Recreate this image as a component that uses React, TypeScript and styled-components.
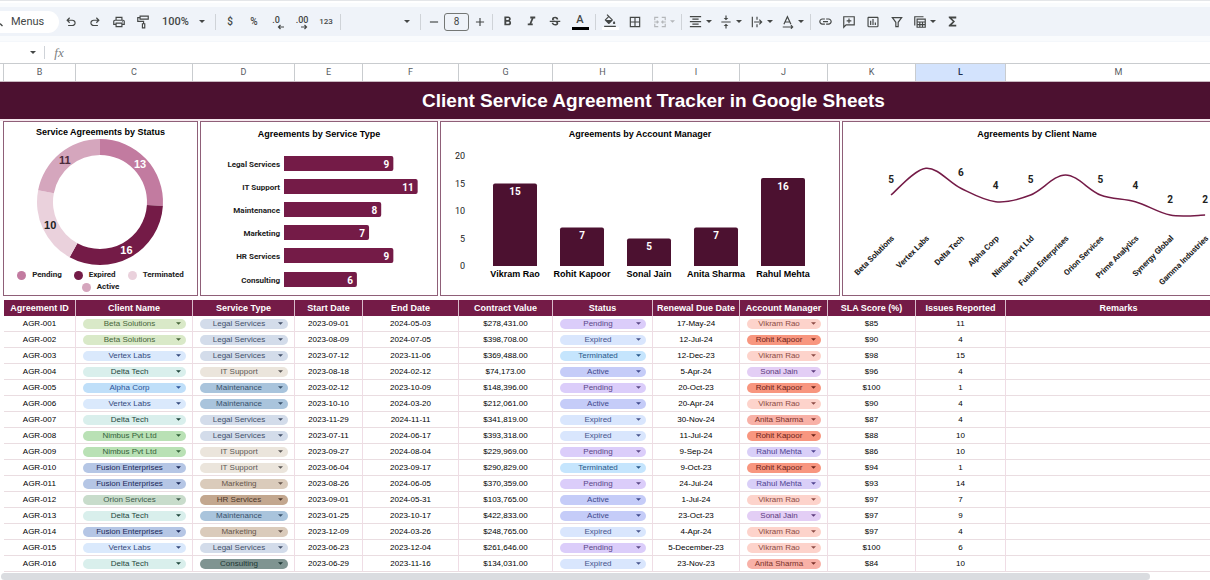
import React, { useState } from "react";
import styled, { createGlobalStyle } from "styled-components";
import {
  MdOutlinePrint,
  MdFormatBold,
  MdFormatItalic,
  MdStrikethroughS,
  MdFormatColorFill,
  MdBorderAll,
  MdFormatAlignCenter,
  MdVerticalAlignCenter,
  MdLink,
  MdInsertChartOutlined,
  MdFunctions,
  MdOutlineFilterAlt,
  MdAdd,
  MdRemove,
} from "react-icons/md";

const sans = `"Liberation Sans", Arial, sans-serif`;
const ui = `Roboto, "Liberation Sans", sans-serif`;

const plum = "#741b47";
const darkPlum = "#4c1130";

const GlobalStyle = createGlobalStyle`
  *, *::before, *::after { box-sizing: border-box; }
  body {
    margin: 0;
    background: #ffffff;
    color: #000000;
    font-family: ${sans};
    overflow-x: hidden;
  }
  button, input, select {
    margin: 0;
    padding: 0;
    border: 0;
    background: transparent;
    color: inherit;
    font: inherit;
  }
`;

/* ---------- Data ---------- */

const columns: { letter: string; title: string; width?: number }[] = [
  { letter: "B", title: "Agreement ID", width: 72 },
  { letter: "C", title: "Client Name", width: 117 },
  { letter: "D", title: "Service Type", width: 102 },
  { letter: "E", title: "Start Date", width: 68 },
  { letter: "F", title: "End Date", width: 96 },
  { letter: "G", title: "Contract Value", width: 94 },
  { letter: "H", title: "Status", width: 100 },
  { letter: "I", title: "Renewal Due Date", width: 87 },
  { letter: "J", title: "Account Manager", width: 88 },
  { letter: "K", title: "SLA Score (%)", width: 88 },
  { letter: "L", title: "Issues Reported", width: 90 },
  { letter: "M", title: "Remarks" },
];

type Tone = { bg: string; fg: string };
type Palette = Record<string, Tone>;

const clients: Palette = {
  "Beta Solutions": { bg: "#d9e9c8", fg: "#47663a" },
  "Vertex Labs": { bg: "#dae9fc", fg: "#33497c" },
  "Delta Tech": { bg: "#d9efec", fg: "#1f463c" },
  "Alpha Corp": { bg: "#bfdff9", fg: "#2c559a" },
  "Nimbus Pvt Ltd": { bg: "#b9e1b5", fg: "#33623a" },
  "Fusion Enterprises": { bg: "#b5c6e5", fg: "#1a2858" },
  "Orion Services": { bg: "#c8dccb", fg: "#3f5c4d" },
};

const services: Palette = {
  "Legal Services": { bg: "#d3dcea", fg: "#43516a" },
  "IT Support": { bg: "#ebe5dc", fg: "#5c5957" },
  Maintenance: { bg: "#a9c4dc", fg: "#38526c" },
  Marketing: { bg: "#dacbbb", fg: "#66564c" },
  "HR Services": { bg: "#c3a78f", fg: "#4c382c" },
  Consulting: { bg: "#7f9491", fg: "#1d3734" },
};

const statuses: Palette = {
  Pending: { bg: "#dbcdfa", fg: "#5a4886" },
  Expired: { bg: "#d9e6fd", fg: "#47558c" },
  Terminated: { bg: "#c5e5fd", fg: "#27588a" },
  Active: { bg: "#c5ccf8", fg: "#3f4a8c" },
};

const managers: Palette = {
  "Vikram Rao": { bg: "#fdd3cb", fg: "#8c4c46" },
  "Rohit Kapoor": { bg: "#f8967f", fg: "#6b2219" },
  "Sonal Jain": { bg: "#e3cef5", fg: "#5d3b7d" },
  "Anita Sharma": { bg: "#f8b1a7", fg: "#7b312a" },
  "Rahul Mehta": { bg: "#d9cff8", fg: "#4f4391" },
};

type Row = [string, string, string, string, string, string, string, string, string, string, string];

const rows: Row[] = [
  ["AGR-001", "Beta Solutions", "Legal Services", "2023-09-01", "2024-05-03", "$278,431.00", "Pending", "17-May-24", "Vikram Rao", "$85", "11"],
  ["AGR-002", "Beta Solutions", "Legal Services", "2023-08-09", "2024-07-05", "$398,708.00", "Expired", "12-Jul-24", "Rohit Kapoor", "$90", "4"],
  ["AGR-003", "Vertex Labs", "Legal Services", "2023-07-12", "2023-11-06", "$369,488.00", "Terminated", "12-Dec-23", "Vikram Rao", "$98", "15"],
  ["AGR-004", "Delta Tech", "IT Support", "2023-08-18", "2024-02-12", "$74,173.00", "Active", "5-Apr-24", "Sonal Jain", "$96", "4"],
  ["AGR-005", "Alpha Corp", "Maintenance", "2023-02-12", "2023-10-09", "$148,396.00", "Pending", "20-Oct-23", "Rohit Kapoor", "$100", "1"],
  ["AGR-006", "Vertex Labs", "Maintenance", "2023-10-10", "2024-03-20", "$212,061.00", "Active", "20-Apr-24", "Vikram Rao", "$90", "4"],
  ["AGR-007", "Delta Tech", "Legal Services", "2023-11-29", "2024-11-11", "$341,819.00", "Expired", "30-Nov-24", "Anita Sharma", "$87", "4"],
  ["AGR-008", "Nimbus Pvt Ltd", "Legal Services", "2023-07-11", "2024-06-17", "$393,318.00", "Expired", "11-Jul-24", "Rohit Kapoor", "$88", "10"],
  ["AGR-009", "Nimbus Pvt Ltd", "IT Support", "2023-09-27", "2024-08-04", "$229,969.00", "Pending", "9-Sep-24", "Rahul Mehta", "$86", "10"],
  ["AGR-010", "Fusion Enterprises", "IT Support", "2023-06-04", "2023-09-17", "$290,829.00", "Terminated", "9-Oct-23", "Rohit Kapoor", "$94", "1"],
  ["AGR-011", "Fusion Enterprises", "Marketing", "2023-08-26", "2024-06-05", "$370,359.00", "Pending", "24-Jul-24", "Rahul Mehta", "$93", "14"],
  ["AGR-012", "Orion Services", "HR Services", "2023-09-01", "2024-05-31", "$103,765.00", "Active", "1-Jul-24", "Vikram Rao", "$97", "7"],
  ["AGR-013", "Delta Tech", "Maintenance", "2023-01-25", "2023-10-17", "$422,833.00", "Active", "23-Oct-23", "Sonal Jain", "$97", "9"],
  ["AGR-014", "Fusion Enterprises", "Marketing", "2023-12-09", "2024-03-26", "$248,765.00", "Expired", "4-Apr-24", "Vikram Rao", "$97", "4"],
  ["AGR-015", "Vertex Labs", "Legal Services", "2023-06-23", "2023-12-04", "$261,646.00", "Pending", "5-December-23", "Vikram Rao", "$100", "6"],
  ["AGR-016", "Delta Tech", "Consulting", "2023-06-29", "2023-11-16", "$134,031.00", "Expired", "23-Nov-23", "Anita Sharma", "$84", "10"],
];

const chipPalettes: Record<number, Palette> = { 1: clients, 2: services, 6: statuses, 8: managers };

/* ---------- Toolbar ---------- */

const Page = styled.div`
  overflow: hidden;
`;

const TopBar = styled.header`
  padding: 6px 0;
  background: #f9fbfd;
  box-shadow: inset 0 2px 0 #ffffff, inset 0 -1px 0 #f4f7fb;
  border-top: 1px solid #e4e6e9;
`;

const Toolbar = styled.div`
  display: flex;
  align-items: center;
  height: 29px;
  background: #eff3f9;
  color: #444746;
  font-family: ${ui};
`;

const MenuSearch = styled.button`
  display: flex;
  align-items: center;
  gap: 8px;
  width: 59px;
  height: 22px;
  border-radius: 0 11px 11px 0;
  background: #ffffff;
  font-size: 11px;
  line-height: 14px;
`;

const ToolButton = styled.button<{ $width?: number; $dim?: boolean }>`
  display: flex;
  align-items: center;
  justify-content: center;
  gap: 3px;
  flex: none;
  width: ${(p) => p.$width ?? 24}px;
  height: 22px;
  color: ${(p) => (p.$dim ? "#b4b7ba" : "inherit")};
  font-size: 10px;
  font-weight: 500;
  line-height: 14px;
  svg { flex: none; }
`;

const FormatLabel = styled.span`
  font-size: 8px;
  line-height: 12px;
`;

const ColorMark = styled.span<{ $bar: string }>`
  display: flex;
  align-items: center;
  justify-content: center;
  width: 17px;
  height: 16px;
  border-bottom: 3px solid ${(p) => p.$bar};
  font-size: 11px;
  line-height: 12px;
`;

const Divider = styled.span`
  flex: none;
  width: 1px;
  height: 16px;
  margin: 0 2px;
  background: #cfd3d8;
`;

const Picker = styled.label<{ $width: number }>`
  display: flex;
  align-items: center;
  flex: none;
  width: ${(p) => p.$width}px;
  padding: 0 8px 0 7px;
  font-size: 11px;
  font-weight: 500;
`;

const PickerSelect = styled.select`
  flex: 1;
  min-width: 0;
  height: 18px;
  appearance: none;
  outline: none;
`;

const SizeInput = styled.input`
  flex: none;
  width: 25px;
  height: 18px;
  border: 1px solid #747775;
  border-radius: 3px;
  text-align: center;
  font-size: 10px;
`;

const FormulaBar = styled.div`
  display: flex;
  align-items: center;
  height: 21px;
  padding-left: 30px;
  color: #444746;
`;

const NameBox = styled.button`
  display: flex;
  align-items: center;
  width: 14px;
  height: 16px;
`;

const FormulaRule = styled.span`
  width: 1px;
  height: 13px;
  background: #cfd3d8;
`;

const FormulaLabel = styled.label`
  width: 28px;
  text-align: center;
  color: #7b7e81;
  font: italic 13px/16px "Liberation Serif", serif;
`;

const FormulaInput = styled.input`
  flex: 1;
  height: 16px;
  font-size: 9px;
  outline: none;
`;

const Caret = ({ small }: { small?: boolean }) => (
  <svg width={small ? 5 : 6} height={3} viewBox="0 0 6 3" aria-hidden="true">
    <path d="M0 0h6L3 3z" fill="currentColor" />
  </svg>
);

const symbolPaths = {
  undo: "M280-200v-80h284q63 0 109.5-40T720-420q0-60-46.5-100T564-560H312l104 104-56 56-200-200 200-200 56 56-104 104h252q97 0 166.5 63T800-420q0 94-69.5 157T564-200H280Z",
  redo: "M396-200q-97 0-166.5-63T160-420q0-94 69.5-157T396-640h252L544-744l56-56 200 200-200 200-56-56 104-104H396q-63 0-109.5 40T240-420q0 60 46.5 100T396-280h284v80H396Z",
};

const Symbol = ({ name }: { name: keyof typeof symbolPaths }) => (
  <svg width={14} height={14} viewBox="0 -960 960 960" aria-hidden="true">
    <path d={symbolPaths[name]} fill="currentColor" />
  </svg>
);

const Stroke = ({ children, width = 2 }: { children: React.ReactNode; width?: number }) => (
  <svg
    width={14}
    height={14}
    viewBox="0 0 24 24"
    fill="none"
    stroke="currentColor"
    strokeWidth={width}
    aria-hidden="true"
  >
    {children}
  </svg>
);

const RollerIcon = () => (
  <Stroke>
    <path d="M7 2h14v5H7zM7 4.500H3V11h10v4M11 15h4v7h-4z" />
  </Stroke>
);

const MergeIcon = () => (
  <Stroke>
    <path d="M9 4H3v5M15 4h6v5M9 20H3v-5M15 20h6v-5M2 12h7M6.500 9.500 9 12l-2.500 2.500M22 12h-7M17.500 9.500 15 12l2.500 2.500" />
  </Stroke>
);

const WrapIcon = () => (
  <Stroke>
    <path d="M4 3v18M12 3v5M12 16v5M7 12h13M16 8l4 4-4 4" />
  </Stroke>
);

const RotateIcon = () => (
  <Stroke>
    <path d="M5 16 11 3l6 13M7.500 12h7M3 20.500h17M17 17.500l3 3-3 3" />
  </Stroke>
);

const FilterIcon = () => (
  <Stroke>
    <path d="M4 4.500h16L14 12.500V20h-4v-7.500z" />
  </Stroke>
);

const CommentIcon = () => (
  <Stroke>
    <path d="M3 21V3h18v14H7zM12 6v8M8 10h8" />
  </Stroke>
);

const TableViewIcon = () => (
  <Stroke>
    <path d="M7 7h14v14H7zM7 12h14M7 16.500h14M11.700 12v9M16.300 12v9M3 18V3h15" />
  </Stroke>
);

const DecimalIcon = ({ digits, more }: { digits: string; more?: boolean }) => (
  <svg width={16} height={16} viewBox="0 0 16 16" aria-hidden="true">
    <text x={more ? 8 : 6} y={9} textAnchor="middle" fontFamily="Roboto" fontWeight={500} fontSize={9} fill="currentColor">
      {digits}
    </text>
    <path
      d={more ? "M7 13h5.500M10.500 11l2 2-2 2" : "M14 13H8.500M10.500 11l-2 2 2 2"}
      fill="none"
      stroke="currentColor"
      strokeWidth={1.200}
    />
  </svg>
);

function SheetToolbar() {
  const [size, setSize] = useState("8");
  return (
    <TopBar>
      <Toolbar role="toolbar" aria-label="Formatting">
        <MenuSearch>
          <svg width={3} height={10} viewBox="0 0 3 10" aria-hidden="true">
            <path d="M0 6.500 2.500 9" stroke="currentColor" strokeWidth={1.300} />
          </svg>
          Menus
        </MenuSearch>
        <ToolButton aria-label="Undo"><Symbol name="undo" /></ToolButton>
        <ToolButton aria-label="Redo"><Symbol name="redo" /></ToolButton>
        <ToolButton aria-label="Print"><MdOutlinePrint size={14} /></ToolButton>
        <ToolButton aria-label="Paint format"><RollerIcon /></ToolButton>
        <Picker $width={58}>
          <PickerSelect aria-label="Zoom" defaultValue="100%">
            <option>50%</option>
            <option>75%</option>
            <option>100%</option>
            <option>125%</option>
          </PickerSelect>
          <Caret />
        </Picker>
        <Divider />
        <ToolButton aria-label="Format as currency">$</ToolButton>
        <ToolButton aria-label="Format as percent">%</ToolButton>
        <ToolButton aria-label="Decrease decimal places"><DecimalIcon digits=".0" /></ToolButton>
        <ToolButton aria-label="Increase decimal places"><DecimalIcon digits=".00" more /></ToolButton>
        <ToolButton aria-label="More formats"><FormatLabel>123</FormatLabel></ToolButton>
        <Divider />
        <Picker $width={75}>
          <PickerSelect aria-label="Font" defaultValue="">
            <option value=""></option>
            <option>Arial</option>
            <option>Roboto</option>
          </PickerSelect>
          <Caret />
        </Picker>
        <Divider />
        <ToolButton $width={21} aria-label="Decrease font size"><MdRemove size={14} /></ToolButton>
        <SizeInput aria-label="Font size" value={size} onChange={(e) => setSize(e.target.value)} />
        <ToolButton $width={21} aria-label="Increase font size"><MdAdd size={14} /></ToolButton>
        <Divider />
        <ToolButton aria-label="Bold"><MdFormatBold size={15} /></ToolButton>
        <ToolButton aria-label="Italic"><MdFormatItalic size={15} /></ToolButton>
        <ToolButton aria-label="Strikethrough"><MdStrikethroughS size={14} /></ToolButton>
        <ToolButton $width={26} aria-label="Text color"><ColorMark $bar="#000000">A</ColorMark></ToolButton>
        <Divider />
        <ToolButton aria-label="Fill color">
          <ColorMark $bar="#ffffff">
            <MdFormatColorFill size={14} viewBox="0 0 24 20" />
          </ColorMark>
        </ToolButton>
        <ToolButton $width={26} aria-label="Borders"><MdBorderAll size={14} /></ToolButton>
        <ToolButton $width={31} $dim aria-label="Merge cells"><MergeIcon /><Caret small /></ToolButton>
        <Divider />
        <ToolButton $width={31} aria-label="Horizontal align"><MdFormatAlignCenter size={15} /><Caret /></ToolButton>
        <ToolButton $width={31} aria-label="Vertical align"><MdVerticalAlignCenter size={14} /><Caret /></ToolButton>
        <ToolButton $width={31} aria-label="Text wrapping"><WrapIcon /><Caret /></ToolButton>
        <ToolButton $width={31} aria-label="Text rotation"><RotateIcon /><Caret /></ToolButton>
        <Divider />
        <ToolButton aria-label="Insert link"><MdLink size={15} /></ToolButton>
        <ToolButton aria-label="Insert comment"><CommentIcon /></ToolButton>
        <ToolButton aria-label="Insert chart"><MdInsertChartOutlined size={14} /></ToolButton>
        <ToolButton aria-label="Create a filter"><FilterIcon /></ToolButton>
        <ToolButton $width={31} aria-label="Table views"><TableViewIcon /><Caret /></ToolButton>
        <ToolButton aria-label="Functions"><MdFunctions size={15} /></ToolButton>
      </Toolbar>
    </TopBar>
  );
}

/* ---------- Sheet ---------- */

const Sheet = styled.main`
  width: calc(100% + 22px);
`;

const ColumnLetters = styled.div`
  display: grid;
  grid-template-columns: 4px ${columns.map((c) => (c.width ? `${c.width}px` : "1fr")).join(" ")};
  height: 19px;
  border-top: 1px solid #c9cccf;
  border-bottom: 1px solid #c9b9c1;
`;

const ColumnLetter = styled.div<{ $active?: boolean }>`
  border-right: 1px solid #c9cccf;
  background: ${(p) => (p.$active ? "#d3e3fd" : "#ffffff")};
  color: ${(p) => (p.$active ? "#1f2f50" : "#575b5f")};
  font-family: ${ui};
  font-size: 9px;
  font-weight: ${(p) => (p.$active ? 500 : 400)};
  line-height: 17px;
  text-align: center;
`;

const Banner = styled.h1`
  margin: 0;
  padding-left: 75px;
  background: ${darkPlum};
  color: #ffffff;
  font-size: 19px;
  font-weight: 700;
  line-height: 37px;
  text-align: center;
`;

const ChartRow = styled.section`
  display: flex;
  gap: 2px;
  padding: 2px 0 4px 3px;
  background: linear-gradient(#f6e8ee 0 2px, #ffffff 2px);
`;

const Card = styled.figure<{ $width?: number; $top?: number }>`
  flex: ${(p) => (p.$width ? `none` : "1")};
  width: ${(p) => (p.$width ? `${p.$width}px` : "auto")};
  min-width: 0;
  margin: 0;
  padding-top: ${(p) => p.$top ?? 6}px;
  border: 1px solid #8f5f78;
  background: #ffffff;
`;

const CardTitle = styled.figcaption`
  font-size: 9px;
  font-weight: 700;
  line-height: 12px;
  text-align: center;
`;

const Plot = styled.svg`
  display: block;
  width: 100%;
  text {
    dominant-baseline: central;
    font-weight: 700;
  }
`;

const Label = styled.text<{ $size?: number; $face?: string }>`
  font-family: ${(p) => p.$face ?? sans};
  font-size: ${(p) => p.$size ?? 9}px;
`;

const Legend = styled.ul`
  display: flex;
  flex-wrap: wrap;
  justify-content: center;
  gap: 0 12px;
  margin: 0;
  padding: 1px 8px 2px;
  list-style: none;
  font: 700 8px/12px ${ui};
  color: #222222;
`;

const LegendItem = styled.li<{ $color: string }>`
  display: flex;
  align-items: center;
  gap: 6px;
  &::before {
    content: "";
    width: 9px;
    height: 9px;
    border-radius: 50%;
    background: ${(p) => p.$color};
  }
`;

const statusSlices = [
  { name: "Pending", value: 13, color: "#c27ba0", text: "#ffffff" },
  { name: "Expired", value: 16, color: plum, text: "#ffffff" },
  { name: "Terminated", value: 10, color: "#ead1dc", text: "#222222" },
  { name: "Active", value: 11, color: "#d5a6bd", text: "#4a2a3a" },
];

function StatusChart() {
  const cx = 96;
  const cy = 64;
  const total = statusSlices.reduce((sum, s) => sum + s.value, 0);
  const at = (fraction: number, r: number) => {
    const a = fraction * 2 * Math.PI;
    return [cx + r * Math.sin(a), cy - r * Math.cos(a)];
  };
  let start = 0;
  return (
    <Card $width={195} $top={4}>
      <CardTitle>Service Agreements by Status</CardTitle>
      <Plot viewBox="0 0 193 130" height={130} role="img" aria-label="Service agreements by status">
        {statusSlices.map((slice) => {
          const from = start / total;
          start += slice.value;
          const to = start / total;
          const [x1, y1] = at(from, 63);
          const [x2, y2] = at(to, 63);
          const [x3, y3] = at(to, 47);
          const [x4, y4] = at(from, 47);
          const [lx, ly] = at((from + to) / 2, 55);
          return (
            <g key={slice.name}>
              <path
                d={`M${x1} ${y1}A63 63 0 0 1 ${x2} ${y2}L${x3} ${y3}A47 47 0 0 0 ${x4} ${y4}Z`}
                fill={slice.color}
              />
              <Label $size={11} x={lx} y={ly} textAnchor="middle" fill={slice.text}>{slice.value}</Label>
            </g>
          );
        })}
      </Plot>
      <Legend>
        {statusSlices.map((s) => (
          <LegendItem key={s.name} $color={s.color}>{s.name}</LegendItem>
        ))}
      </Legend>
    </Card>
  );
}

const serviceCounts: [string, number][] = [
  ["Legal Services", 9],
  ["IT Support", 11],
  ["Maintenance", 8],
  ["Marketing", 7],
  ["HR Services", 9],
  ["Consulting", 6],
];

function ServiceChart() {
  return (
    <Card $width={238}>
      <CardTitle>Agreements by Service Type</CardTitle>
      <Plot viewBox="0 0 236 154" height={154} role="img" aria-label="Agreements by service type">
        {serviceCounts.map(([name, count], i) => {
          const y = 16 + Math.round(i * 23.1);
          const end = 83 + count * 12.15;
          return (
            <g key={name}>
              <Label $face={ui} $size={8} x={79} y={y + 8} textAnchor="end" fill="#222222">{name}</Label>
              <path d={`M83 ${y}H${end - 2}a2 2 0 0 1 2 2v11a2 2 0 0 1-2 2H83z`} fill={plum} />
              <Label $face={ui} $size={10} x={end - 4} y={y + 8} textAnchor="end" fill="#ffffff">{count}</Label>
            </g>
          );
        })}
      </Plot>
    </Card>
  );
}

const managerCounts: [string, number][] = [
  ["Vikram Rao", 15],
  ["Rohit Kapoor", 7],
  ["Sonal Jain", 5],
  ["Anita Sharma", 7],
  ["Rahul Mehta", 16],
];

const AxisLabel = styled(Label)`
  && { font-weight: 400; }
`;

function ManagerChart() {
  const base = 126;
  const unit = 5.5;
  return (
    <Card $width={400}>
      <CardTitle>Agreements by Account Manager</CardTitle>
      <Plot viewBox="0 0 398 154" height={154} role="img" aria-label="Agreements by account manager">
        {[0, 5, 10, 15, 20].map((tick) => (
          <AxisLabel key={tick} $face={ui} x={24} y={base - tick * unit} textAnchor="end" fill="#222222">{tick}</AxisLabel>
        ))}
        {managerCounts.map(([name, count], i) => {
          const x = 52 + i * 67;
          const top = base - count * unit;
          return (
            <g key={name}>
              <path d={`M${x} ${base}V${top + 2}a2 2 0 0 1 2-2h40a2 2 0 0 1 2 2V${base}z`} fill={darkPlum} />
              <Label $face={ui} $size={10} x={x + 22} y={top + 8} textAnchor="middle" fill="#ffffff">{count}</Label>
              <Label x={x + 22} y={base + 8} textAnchor="middle">{name}</Label>
            </g>
          );
        })}
      </Plot>
    </Card>
  );
}

const clientCounts: [string, number, boolean][] = [
  ["Beta Solutions", 5, true],
  ["Vertex Labs", 9, false],
  ["Delta Tech", 6, true],
  ["Alpha Corp", 4, true],
  ["Nimbus Pvt Ltd", 5, true],
  ["Fusion Enterprises", 8, false],
  ["Orion Services", 5, true],
  ["Prime Analytics", 4, true],
  ["Synergy Global", 2, true],
  ["Gamma Industries", 2, true],
];

function ClientChart() {
  const points = clientCounts.map(([, count], i) => [48 + i * 34.9, 55 - (count - 5) * 6.7]);
  const curve = points.slice(0, -1).map((p, i) => {
    const before = points[i - 1] ?? p;
    const next = points[i + 1];
    const after = points[i + 2] ?? next;
    const c1 = [p[0] + (next[0] - before[0]) / 6, p[1] + (next[1] - before[1]) / 6];
    const c2 = [next[0] - (after[0] - p[0]) / 6, next[1] - (after[1] - p[1]) / 6];
    return `C${c1} ${c2} ${next}`;
  });
  return (
    <Card>
      <CardTitle>Agreements by Client Name</CardTitle>
      <Plot viewBox="0 0 388 154" height={154} role="img" aria-label="Agreements by client name">
        <path d={`M${points[0]}${curve.join("")}`} fill="none" stroke={plum} strokeWidth={1.5} />
        {clientCounts.map(([name, count, labelled], i) => {
          const [x, y] = points[i];
          return (
            <g key={name}>
              {labelled && <Label $face={ui} $size={10} x={x} y={y - 16} textAnchor="middle" fill="#222222">{count}</Label>}
              <Label $face={ui} $size={8} textAnchor="end" fill="#222222" transform={`translate(${x + 2} 97) rotate(-45)`}>{name}</Label>
            </g>
          );
        })}
      </Plot>
    </Card>
  );
}

/* ---------- Table ---------- */

const DataTable = styled.table`
  width: calc(100% - 4px);
  margin-left: 4px;
  table-layout: fixed;
  border-collapse: separate;
  border-spacing: 0;
`;

const HeadCell = styled.th`
  height: 16px;
  padding: 0;
  border-right: 1px solid #d9bccb;
  background: ${plum};
  color: #ffffff;
  font-size: 9px;
  font-weight: 700;
  line-height: 15px;
  text-align: center;
  white-space: nowrap;
`;

const Cell = styled.td`
  height: 16px;
  padding: 0;
  border-right: 1px solid #efdde5;
  border-bottom: 1px solid #eadde1;
  font-size: 8px;
  line-height: 15px;
  text-align: center;
`;

const ChipBox = styled.label<{ $tone: Tone }>`
  display: grid;
  align-items: center;
  height: 10px;
  margin: 0 6px 0 7px;
  border-radius: 5px;
  background: ${(p) => p.$tone.bg};
  color: ${(p) => p.$tone.fg};
  > * { grid-area: 1 / 1; }
  > svg {
    justify-self: end;
    margin-right: 5px;
    pointer-events: none;
  }
`;

const ChipSelect = styled.select`
  width: 100%;
  height: 10px;
  padding-right: 10px;
  appearance: none;
  outline: none;
  line-height: 10px;
  text-align: center;
  text-align-last: center;
`;

function Chip({ value, palette, label }: { value: string; palette: Palette; label: string }) {
  const [current, setCurrent] = useState(value);
  return (
    <ChipBox $tone={palette[current]}>
      <ChipSelect aria-label={label} value={current} onChange={(e) => setCurrent(e.target.value)}>
        {Object.keys(palette).map((name) => (
          <option key={name}>{name}</option>
        ))}
      </ChipSelect>
      <Caret small />
    </ChipBox>
  );
}

function AgreementTable() {
  return (
    <DataTable>
      <colgroup>
        {columns.map((c) => (
          <col key={c.letter} width={c.width} />
        ))}
      </colgroup>
      <thead>
        <tr>
          {columns.map((c) => (
            <HeadCell key={c.letter} scope="col">{c.title}</HeadCell>
          ))}
        </tr>
      </thead>
      <tbody>
        {rows.map((row) => (
          <tr key={row[0]}>
            {row.map((value, i) => (
              <Cell key={i}>
                {chipPalettes[i] ? (
                  <Chip value={value} palette={chipPalettes[i]} label={`${columns[i].title}, ${row[0]}`} />
                ) : (
                  value
                )}
              </Cell>
            ))}
            <Cell />
          </tr>
        ))}
      </tbody>
    </DataTable>
  );
}

const ScrollTrack = styled.div`
  padding: 1px 0 0 1px;
  background: #ffffff;
`;

const ScrollThumb = styled.div`
  width: 95%;
  height: 7px;
  border-radius: 4px;
  background: #dadce0;
`;

export default function App() {
  return (
    <Page>
      <GlobalStyle />
      <SheetToolbar />
      <FormulaBar>
        <NameBox aria-label="Name box"><Caret /></NameBox>
        <FormulaRule />
        <FormulaLabel htmlFor="formula">fx</FormulaLabel>
        <FormulaInput id="formula" />
      </FormulaBar>
      <Sheet>
        <ColumnLetters>
          <ColumnLetter />
          {columns.map((c) => (
            <ColumnLetter key={c.letter} $active={c.letter === "L"}>{c.letter}</ColumnLetter>
          ))}
        </ColumnLetters>
        <Banner>Client Service Agreement Tracker in Google Sheets</Banner>
        <ChartRow>
          <StatusChart />
          <ServiceChart />
          <ManagerChart />
          <ClientChart />
        </ChartRow>
        <AgreementTable />
      </Sheet>
      <ScrollTrack>
        <ScrollThumb />
      </ScrollTrack>
    </Page>
  );
}
